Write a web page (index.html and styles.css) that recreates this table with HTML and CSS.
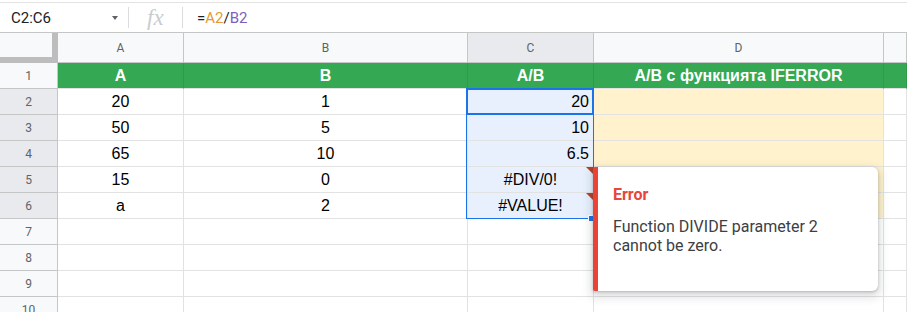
FILE: index.html
```html
<!DOCTYPE html>
<html lang="bg">
<head>
<meta charset="utf-8">
<title>Sheet</title>
<link rel="stylesheet" href="styles.css">
</head>
<body>
<div class="app">
  <div class="formula-bar">
    <div class="name-box">
      <span>C2:C6</span>
      <svg class="caret" width="6" height="4" viewBox="0 0 6 4"><path d="M0 0h6L3 4z" fill="#5f6368"/></svg>
    </div>
    <div class="sep"></div>
    <div class="fx">fx</div>
    <div class="sep"></div>
    <div class="formula">=<span class="ref1">A2</span>/<span class="ref2">B2</span></div>
  </div>

  <div class="sheet">
    <div class="cell corner"></div>
    <div class="cell ch">A</div>
    <div class="cell ch">B</div>
    <div class="cell ch sel">C</div>
    <div class="cell ch">D</div>
    <div class="cell ch"></div>

    <div class="cell rh">1</div>
    <div class="cell hdr">A</div>
    <div class="cell hdr">B</div>
    <div class="cell hdr">A/B</div>
    <div class="cell hdr">A/B с функцията IFERROR</div>
    <div class="cell hdr"></div>

    <div class="cell rh sel">2</div>
    <div class="cell">20</div>
    <div class="cell">1</div>
    <div class="cell pick num">20</div>
    <div class="cell hl"></div>
    <div class="cell"></div>

    <div class="cell rh sel">3</div>
    <div class="cell">50</div>
    <div class="cell">5</div>
    <div class="cell pick num">10</div>
    <div class="cell hl"></div>
    <div class="cell"></div>

    <div class="cell rh sel">4</div>
    <div class="cell">65</div>
    <div class="cell">10</div>
    <div class="cell pick num">6.5</div>
    <div class="cell hl"></div>
    <div class="cell"></div>

    <div class="cell rh sel">5</div>
    <div class="cell">15</div>
    <div class="cell">0</div>
    <div class="cell pick err">#DIV/0!</div>
    <div class="cell hl"></div>
    <div class="cell"></div>

    <div class="cell rh sel">6</div>
    <div class="cell">a</div>
    <div class="cell">2</div>
    <div class="cell pick err">#VALUE!</div>
    <div class="cell hl"></div>
    <div class="cell"></div>

    <div class="cell rh">7</div>
    <div class="cell"></div><div class="cell"></div><div class="cell"></div><div class="cell"></div><div class="cell"></div>
    <div class="cell rh">8</div>
    <div class="cell"></div><div class="cell"></div><div class="cell"></div><div class="cell"></div><div class="cell"></div>
    <div class="cell rh">9</div>
    <div class="cell"></div><div class="cell"></div><div class="cell"></div><div class="cell"></div><div class="cell"></div>
    <div class="cell rh">10</div>
    <div class="cell"></div><div class="cell"></div><div class="cell"></div><div class="cell"></div><div class="cell"></div>
  </div>

  <!-- selection C2:C6 with the active cell and fill handle -->
  <div class="range"></div>
  <div class="active"></div>
  <div class="handle"></div>

  <!-- error tooltip for C5 -->
  <div class="popup">
    <div class="popup-title">Error</div>
    <div class="popup-text">Function DIVIDE parameter 2 cannot be zero.</div>
  </div>
</div>
</body>
</html>
```
FILE: styles.css
```css
body {
  margin: 0;
  background: #fff;
  font-family: Roboto, "Liberation Sans", sans-serif;
}

.app {
  position: relative;
  width: 907px;
  height: 312px;
  overflow: hidden;
}

/* ---- formula bar ---- */
.formula-bar {
  margin-top: 2px;
  height: 29px;
  border-top: 1px solid #e3e3e3;
  display: flex;
  align-items: center;
}

.name-box {
  width: 128px;
  box-sizing: border-box;
  padding: 0 10px 0 11px;
  display: flex;
  align-items: center;
  justify-content: space-between;
  font-size: 15px;
  color: #202124;
}

.caret {
  display: block;
}

.sep {
  width: 1px;
  height: 21px;
  background: #dadce0;
}

.fx {
  width: 53px;
  box-sizing: border-box;
  padding-left: 18px;
  font-family: "Liberation Serif", serif;
  font-style: italic;
  font-size: 23px;
  color: #c9cccf;
  line-height: 1;
}

.formula {
  padding-left: 14px;
  font-size: 15px;
  color: #202124;
}

.ref1 { color: #e69a2e; }
.ref2 { color: #7e5fbf; }

/* ---- grid ---- */
.sheet {
  display: grid;
  grid-template-columns: 58px 126px 284px 126px 290px 1fr;
  grid-template-rows: 30px repeat(10, 26px);
  border-top: 1px solid #c4c7c5;
}

.cell {
  box-sizing: border-box;
  border-right: 1px solid #e2e2e3;
  border-bottom: 1px solid #e2e2e3;
  display: flex;
  align-items: center;
  justify-content: center;
  padding: 0 4px;
  white-space: nowrap;
  overflow: hidden;
  font-family: "Liberation Sans", Arial, sans-serif;
  font-size: 16px;
  color: #000;
}

.ch,
.rh {
  background: #f8f9fa;
  border-color: #c4c7c5;
  font-family: Roboto, sans-serif;
  font-size: 12px;
  color: #5f6368;
}

.ch.sel,
.rh.sel {
  background: #e8eaed;
}

.corner {
  background: #f8f9fa;
  border-right: 6px solid #bdbdbd;
  border-bottom: 6px solid #bdbdbd;
}

.hdr {
  background: #34a853;
  border-right-color: #30994c;
  color: #fff;
  font-weight: bold;
  font-size: 16px;
}

.pick { background: #e8f0fe; }
.hl { background: #fff2cc; }

.num {
  justify-content: flex-end;
}

.err {
  position: relative;
}

.err::after {
  content: "";
  position: absolute;
  top: 0;
  right: 0;
  border-top: 7px solid #b3412c;
  border-left: 7px solid transparent;
}

/* ---- selection ---- */
.range,
.active,
.handle {
  position: absolute;
  box-sizing: border-box;
}

.range {
  left: 466px;
  top: 88px;
  width: 128px;
  height: 131px;
  border: 1px solid #1a73e8;
}

.active {
  left: 466px;
  top: 88px;
  width: 128px;
  height: 27px;
  border: 2px solid #1a73e8;
}

.handle {
  left: 588px;
  top: 215px;
  width: 7px;
  height: 7px;
  background: #1a73e8;
  border: 1px solid #fff;
}

/* ---- error tooltip ---- */
.popup {
  position: absolute;
  left: 593px;
  top: 167px;
  width: 285px;
  height: 124px;
  box-sizing: border-box;
  padding: 18px 16px 0 15px;
  background: #fff;
  border-left: 5px solid #ea4335;
  border-radius: 2px 6px 6px 2px;
  box-shadow: 0 1px 3px rgba(60, 64, 67, 0.3), 0 4px 8px 3px rgba(60, 64, 67, 0.15);
}

.popup-title {
  font-size: 16px;
  line-height: 20px;
  font-weight: 700;
  color: #e8453c;
}

.popup-text {
  margin-top: 12px;
  width: 230px;
  font-size: 16px;
  line-height: 19px;
  color: #3c4043;
}
```
